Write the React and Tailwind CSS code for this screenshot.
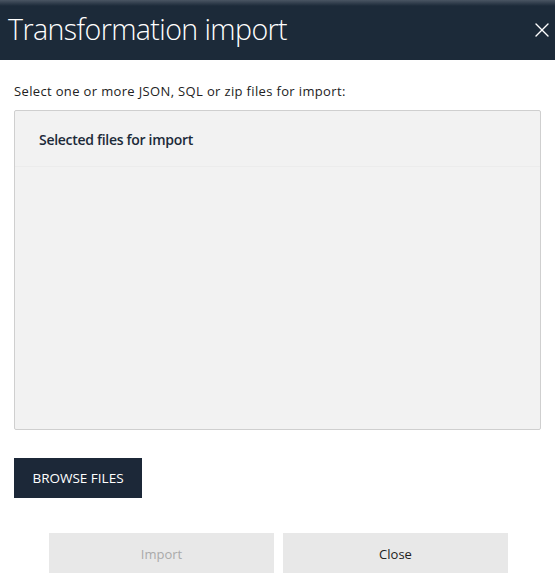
import { X } from 'lucide-react'

const font = { fontFamily: '"Open Sans", "Noto Sans", sans-serif' }

export default function App() {
  return (
    <div className="w-[555px] h-[578px] bg-white flex flex-col" style={font}>
      {/* Header */}
      <div className="h-[60px] flex items-center justify-between pl-2 pr-[1px] bg-gradient-to-b from-[#4a5563] via-[#1c2a39] via-[10%] to-[#1c2a39]">
        <h1 className="text-[28.6px] font-light text-white tracking-[-0.6px] leading-none pb-[2px]">Transformation import</h1>
        <X size={24} strokeWidth={1.4} className="text-white" />
      </div>

      <div className="flex flex-col px-[14px] pt-[23px]">
        <p className="text-[13px] text-[#222] tracking-[0.35px] leading-[16px]">Select one or more JSON, SQL or zip files for import:</p>

        {/* Selected files panel */}
        <div className="mt-[11px] h-[320px] border border-[#cfcfcf] rounded-[2px] bg-[#f2f2f2] flex flex-col">
          <div className="h-[56px] flex items-center px-6 pt-[2px] border-b border-[#ececec]">
            <span className="text-[14px] font-semibold text-[#1c2a39] tracking-[-0.3px]">Selected files for import</span>
          </div>
        </div>

        <div className="mt-[28px]">
          <button className="h-[40px] w-[128px] bg-[#1c2838] text-white text-[13.5px]">BROWSE FILES</button>
        </div>

        <div className="mt-[35px] flex justify-center gap-[9px] pl-[2px]">
          <button className="h-[40px] w-[225px] bg-[#e8e8e8] text-[#aaaaaa] text-[13px] pt-[3px]">Import</button>
          <button className="h-[40px] w-[225px] bg-[#e8e8e8] text-[#222] text-[13px] pt-[3px]">Close</button>
        </div>
      </div>
    </div>
  )
}
